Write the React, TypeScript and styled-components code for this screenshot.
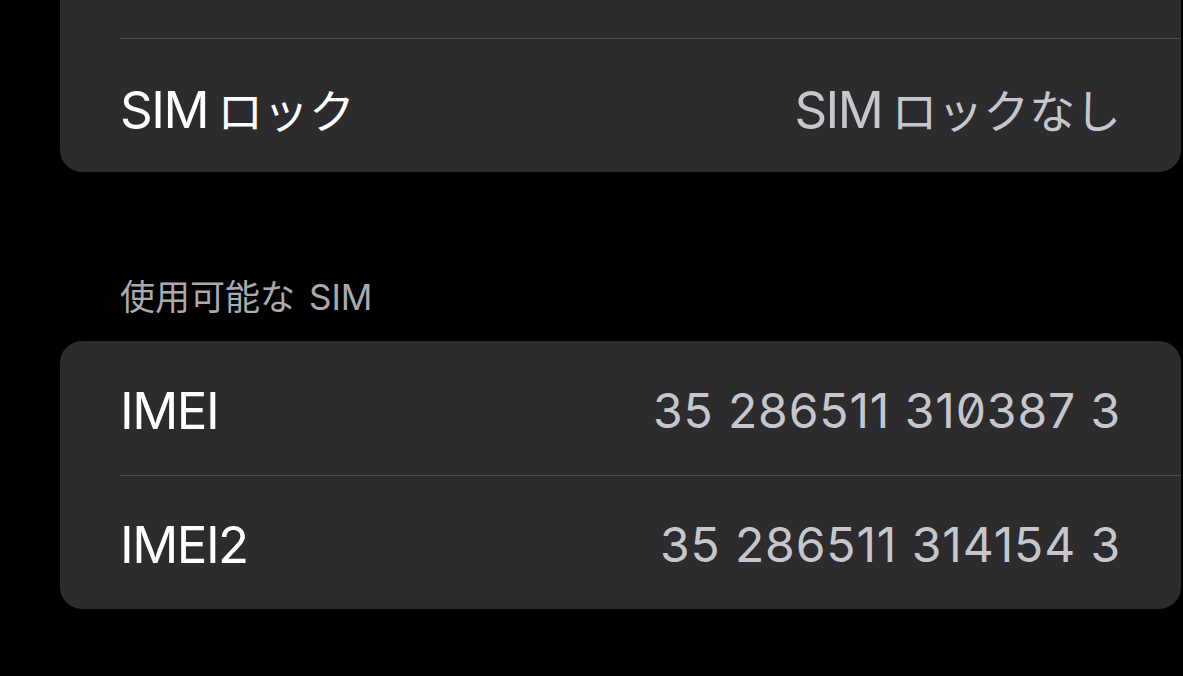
import React from "react";
import styled, {createGlobalStyle} from "styled-components";

const GlobalStyle = createGlobalStyle`
    html, body {
        margin: 0;
        padding: 0;
        background: #000;
        overflow: hidden;
    }
`;

const fontStack = `Inter, "Noto Sans CJK JP", "Noto Sans", sans-serif`;

type RowData = {label: string, value: string};

const lockRows: RowData[] = [
    {label: "", value: ""},
    {label: "SIMロック", value: "SIMロックなし"},
];

const simRows: RowData[] = [
    {label: "IMEI", value: "35 286511 310387 3"},
    {label: "IMEI2", value: "35 286511 314154 3"},
];

// iOS puts a little space between latin and japanese runs, do the same by hand
const MixedText: React.FC<{text: string}> = ({text}) => {
    const runs = text.match(/[A-Za-z0-9 ]+|[^A-Za-z0-9 ]+/g) || [];
    return (
        <>
            {runs.map((run, i) => /[A-Za-z0-9]/.test(run)
                ? <Latin key={i} $spaced={i > 0}>{run}</Latin>
                : <Kana key={i} $spaced={i > 0}>{run}</Kana>
            )}
        </>
    );
};

const App: React.FC = () => {
    return (
        <>
            <GlobalStyle />
            <Screen>
                <Scroller>
                    <Card>
                        {lockRows.map((row, i) => (
                            <Row key={i}>
                                <RowInner $divided={i > 0}>
                                    <Label><MixedText text={row.label} /></Label>
                                    <Value><MixedText text={row.value} /></Value>
                                </RowInner>
                            </Row>
                        ))}
                    </Card>

                    <SectionHeader><MixedText text="使用可能なSIM" /></SectionHeader>

                    <Card>
                        {simRows.map((row, i) => (
                            <Row key={row.label}>
                                <RowInner $divided={i > 0}>
                                    <Label>{row.label}</Label>
                                    <Value $numeric>{row.value}</Value>
                                </RowInner>
                            </Row>
                        ))}
                    </Card>
                </Scroller>
            </Screen>
        </>
    );
};

export default App;


const Screen = styled.div`
    width: 1183px;
    height: 676px;
    overflow: hidden;
    background: #000;
    font-family: ${fontStack};
`;

// content is scrolled up, so the first card starts above the window
const Scroller = styled.div`
    display: flex;
    flex-direction: column;
    margin-top: -96px;
    padding: 0 2px 0 60px;
`;

const Card = styled.div`
    background: #2c2c2f;
    border-radius: 22px;
    overflow: hidden;
`;

const Row = styled.div`
    display: flex;
    padding-left: 60px;
`;

const RowInner = styled.div<{$divided?: boolean}>`
    flex: 1;
    height: 134px;
    display: flex;
    align-items: center;
    justify-content: space-between;
    padding: 4px 60px 0 0;
    box-sizing: border-box;
    border-top: ${p => p.$divided ? '1px solid #4b4b4f' : 'none'};
`;

const Latin = styled.span<{$spaced?: boolean}>`
    margin-left: ${p => p.$spaced ? '0.2em' : '0'};
`;

const Kana = styled.span<{$spaced?: boolean}>`
    margin-left: ${p => p.$spaced ? '0.2em' : '0'};
    letter-spacing: 0;
`;

const Label = styled.div`
    color: #fff;
    font-size: 51px;
    letter-spacing: -1.5px;
    white-space: nowrap;

    & ${Kana} {
        font-size: 0.9em;
    }
`;

const Value = styled.div<{$numeric?: boolean}>`
    color: #c6c6cb;
    font-size: ${p => p.$numeric ? '48px' : '51px'};
    letter-spacing: ${p => p.$numeric ? '0.9px' : '-1.5px'};
    font-feature-settings: ${p => p.$numeric ? '"zero" 1' : 'normal'};
    white-space: nowrap;

    & ${Kana} {
        font-size: 0.9em;
    }
`;

const SectionHeader = styled.div`
    margin: 105px 0 24px;
    padding-left: 60px;
    color: #a9a9ae;
    font-size: 35px;
    line-height: 40px;
    white-space: nowrap;

    & ${Latin} {
        margin-left: 0.4em;
    }
`;
